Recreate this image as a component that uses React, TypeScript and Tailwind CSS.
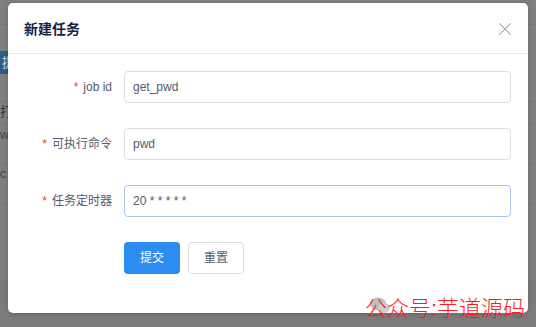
import { X } from "lucide-react";

const fields = [
  { label: "job id", value: "get_pwd", focus: false },
  { label: "可执行命令", value: "pwd", focus: false },
  { label: "任务定时器", value: "20 * * * * *", focus: true },
];

const font = { fontFamily: '"Liberation Sans", Arial, "Noto Sans CJK SC", sans-serif' };

const BackgroundPage = () => {
  return (
    <div className="flex flex-col w-full h-full bg-[#7f7f7f]">
      <div className="h-[25px] border-b border-[#767676]" />
      <div className="h-[26px]" />
      <div className="h-[23px] flex">
        <div className="w-[30px] bg-[#2f5b86] text-[#c9d6e3] text-[13px] leading-[23px] pl-[2px]">提</div>
      </div>
      <div className="h-[28px] border-b border-[#767676]" />
      <div className="h-[23px] border-b border-[#767676] text-[13px] text-[#333] leading-[20px]">打</div>
      <div className="h-[39px] border-b border-[#767676] text-[12px] text-[#444] leading-[20px]">w</div>
      <div className="h-[40px] border-b border-[#767676] text-[12px] text-[#444] leading-[20px]">c</div>
      <div className="h-[78px] border-b border-[#777]" />
      <div className="flex-1 bg-[#7b7b7b]" />
    </div>
  );
};

const App = () => {
  return (
    <div className="relative w-[536px] h-[327px] overflow-hidden" style={font}>
      <BackgroundPage />

      <div className="absolute left-[8px] top-[3px] w-[520px] h-[310px] bg-white rounded-[5px] shadow-[0_1px_4px_rgba(0,0,0,0.2)] flex flex-col">
        <div className="h-[51px] flex items-center justify-between pl-4 pr-[12px] border-b border-[#e8eaec]">
          <h1 className="text-[14px] font-bold text-[#17233d] pt-[3px]">新建任务</h1>
          <X size={22} strokeWidth={1.1} className="text-[#a0a0a0] mt-[2px]" />
        </div>

        <div className="flex flex-col gap-[25px] pt-[17px]">
          {fields.map((row) => (
            <div key={row.label} className="flex items-center">
              <label className="w-[116px] shrink-0 pr-[12px] text-right text-[12px] text-[#515a6e]">
                <span className="text-[#ed4014] mr-[5px]">*</span>
                {row.label}
              </label>
              <div
                className={
                  row.focus
                    ? "w-[387px] h-[32px] rounded-[4px] border border-[#a4c6ee] pl-[8px] flex items-center text-[12px] text-[#515a6e]"
                    : "w-[387px] h-[32px] rounded-[4px] border border-[#dcdee2] pl-[8px] flex items-center text-[12px] text-[#515a6e]"
                }
              >
                {row.value}
              </div>
            </div>
          ))}

          <div className="flex gap-[8px] pl-[116px]">
            <button className="w-[56px] h-[32px] rounded-[4px] bg-[#2d8cf0] text-white text-[12px]">提交</button>
            <button className="w-[56px] h-[32px] rounded-[4px] border border-[#dcdee2] bg-white text-[#515a6e] text-[12px]">重置</button>
          </div>
        </div>
      </div>

      {/* watermark */}
      <div className="absolute left-[365px] top-[292px] flex items-center">
        <div className="relative">
          <svg width="22" height="20" viewBox="0 0 22 20" className="absolute left-[4px] top-[4px]">
            <ellipse cx="9" cy="8" rx="8" ry="6.5" fill="#bdbdbd" />
            <ellipse cx="15" cy="12" rx="6" ry="5" fill="#cfcfcf" />
          </svg>
          <span className="relative text-[22px] text-[#ff1a1a] font-light">公众号:芋道源码</span>
        </div>
      </div>
    </div>
  );
};

export default App;
